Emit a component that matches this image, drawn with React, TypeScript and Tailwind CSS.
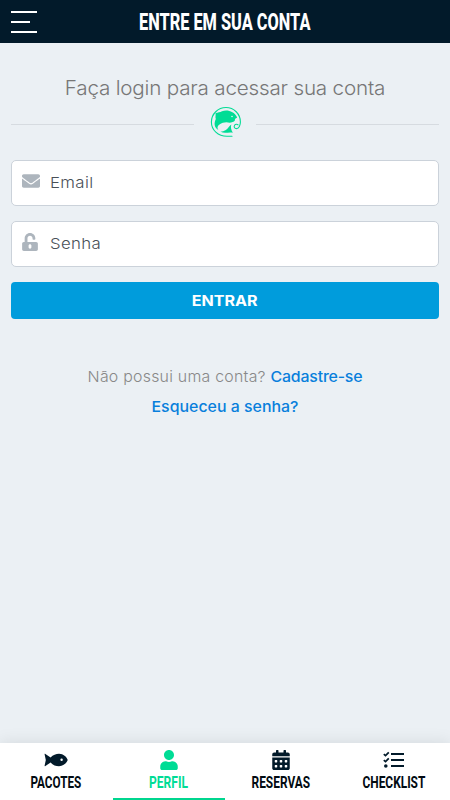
import { FaCalendarAlt, FaEnvelope, FaUnlockAlt, FaUser } from "react-icons/fa";

function FishIcon({ className }: { className?: string }) {
  return (
    <svg viewBox="0 0 24 14" className={className}>
      <path
        d="M0.6 1.2C0.6 0.7 1 0.7 1.4 1L6.6 4.6C9 2 12 0.8 15 0.8C19.5 0.8 22.6 4.2 23.5 6.4C23.7 6.9 23.7 7.1 23.5 7.6C22.6 9.8 19.5 13.2 15 13.2C12 13.2 9 12 6.6 9.4L1.4 13C1 13.3 0.6 13.3 0.6 12.8L1.8 7Z"
        fill="currentColor"
      />
      <circle cx="17.6" cy="6.8" r="1.2" fill="white" />
    </svg>
  );
}

function TasksIcon({ className }: { className?: string }) {
  return (
    <svg viewBox="0 0 21 18" className={className} fill="none" stroke="currentColor">
      <path d="M8 3H21M8 9H21M8 15H21" strokeWidth="2" />
      <path d="M0.8 3.2L2.5 4.7L5.8 1.3M0.8 9.2L2.5 10.7L5.8 7.3" strokeWidth="1.7" />
      <circle cx="2.8" cy="15" r="1.8" fill="currentColor" stroke="none" />
    </svg>
  );
}

const tabs = [
  { label: "PACOTES", icon: FishIcon, size: "w-6 h-[14px]", scale: "scale-x-[0.69]", active: false },
  { label: "PERFIL", icon: FaUser, size: "size-5", scale: "scale-x-[0.71]", active: true },
  { label: "RESERVAS", icon: FaCalendarAlt, size: "size-5", scale: "scale-x-[0.7]", active: false },
  { label: "CHECKLIST", icon: TasksIcon, size: "w-[21px] h-[18px]", scale: "scale-x-[0.7]", active: false },
];

function FishLogo() {
  return (
    <svg viewBox="0 0 32 32" className="size-8 shrink-0" fill="none">
      <path
        d="M22 30.3H17C8 30.3 1.4 24 1.4 16C1.4 8 8 1.5 16 1.5C24 1.5 30.4 8 30.4 16C30.4 19 29 22.5 26.5 22.6C24.5 22.6 23.6 20.6 24.6 19.2C25.4 18.1 27 18 28 18.8"
        stroke="#00dc95"
        strokeWidth="1.1"
        strokeLinecap="round"
      />
      <path
        d="M5.5 7C8 6.5 10 6.5 12 5.3C17 3.5 24 5 27.2 11.5C25.4 12.6 24.5 13 25 14.3C24 16.2 21.5 16.4 19.5 16.8C17 15.8 12.5 16.2 9.5 18.5C7 20.3 7 22.2 8.5 24C3.8 21.5 4 17 5.8 13C5 11 6 9 5.5 7Z"
        fill="#00dc95"
      />
      <path d="M10.5 25.8C14.5 25.3 17 23.5 18.4 21.5C19.1 20.5 20 19.5 21.3 18.5C20.5 21.5 21 23.5 22.8 26.8C19 25.6 15 28 10.5 25.8Z" fill="#00dc95" />
      <circle cx="22" cy="10.5" r="0.8" fill="#ebf0f4" />
    </svg>
  );
}

function Field({ icon: Icon, label, iconClass }: { icon: typeof FaUser; label: string; iconClass: string }) {
  return (
    <label className="flex h-[46px] items-center rounded-[5px] border border-[#cbd2da] bg-white pl-[10px]">
      <span className="mb-[5px] w-[28px] text-[#adb5bd]">
        <Icon className={iconClass} />
      </span>
      <span className="origin-left scale-x-[1.12] text-[15px] font-light tracking-[0.3px] text-[#495057]">{label}</span>
    </label>
  );
}

export default function App() {
  return (
    <div className="flex h-screen flex-col overflow-hidden bg-[#ebf0f4] font-[Inter,sans-serif]">
      <header className="grid h-[43px] grid-cols-[1fr_auto_1fr] items-center bg-[#021a2a]">
        <div className="flex w-[37px] flex-col gap-[8px] pl-[11px]">
          <span className="h-[2px] w-[26px] bg-white" />
          <span className="h-[2px] w-[19px] bg-white" />
          <span className="h-[2px] w-[26px] bg-white" />
        </div>
        <div className="flex w-[172px] justify-center">
          <h1 className="mt-px shrink-0 scale-x-[0.71] whitespace-nowrap font-[Roboto,sans-serif] text-[23px] font-extrabold leading-none text-white">
            ENTRE EM SUA CONTA
          </h1>
        </div>
      </header>

      <main className="flex flex-1 flex-col px-[11px] pt-[30px]">
        <h2 className="scale-x-[1.06] text-center text-[19.5px] font-light leading-[30px] tracking-[-0.2px] text-[#777777]">
          Faça login para acessar sua conta
        </h2>
        <div className="mt-[3px] flex items-center">
          <span className="mt-[4px] h-px flex-1 bg-[#d6dbe0]" />
          <div className="flex w-[62px] justify-center pl-px">
            <FishLogo />
          </div>
          <span className="mt-[4px] h-px flex-1 bg-[#d6dbe0]" />
        </div>

        <form className="mt-[22px] flex flex-col">
          <Field icon={FaEnvelope} label="Email" iconClass="size-[18px]" />
          <div className="mt-[15px]">
            <Field icon={FaUnlockAlt} label="Senha" iconClass="size-[18px] -ml-px" />
          </div>
          <button type="button" className="mt-[15px] h-[37px] rounded-[4px] bg-[#009cdc] text-[15px] font-bold text-white">
            <span className="inline-block scale-x-[1.07] pt-px">ENTRAR</span>
          </button>
        </form>

        <div className="mt-[42px] scale-x-[1.06] text-center text-[15px] leading-[31px]">
          <p className="font-light tracking-[0.22px] text-[#888888]">
            Não possui uma conta?{" "}
            <a className="font-medium tracking-[-0.18px] text-[#087fdc]">Cadastre-se</a>
          </p>
          <p className="-mt-px">
            <a className="font-medium text-[#087fdc]">Esqueceu a senha?</a>
          </p>
        </div>
      </main>

      <nav className="grid h-[57px] grid-cols-4 bg-white shadow-[0_0_16px_rgba(0,0,0,0.1)]">
        {tabs.map(({ label, icon: Icon, size, scale, active }) => (
          <a
            key={label}
            className={`flex flex-col items-center border-b-2 pt-[7px] ${
              active ? "border-[#00d68f] text-[#00dc95]" : "border-transparent text-[#021a2a]"
            }`}
          >
            <span className="flex h-5 items-center">
              <Icon className={size} />
            </span>
            <span
              className={`mt-[4px] whitespace-nowrap font-[Roboto,sans-serif] text-[17px] font-bold leading-none ${scale} ${
                active ? "" : "text-[#020b12]"
              }`}
            >
              {label}
            </span>
          </a>
        ))}
      </nav>
    </div>
  );
}
